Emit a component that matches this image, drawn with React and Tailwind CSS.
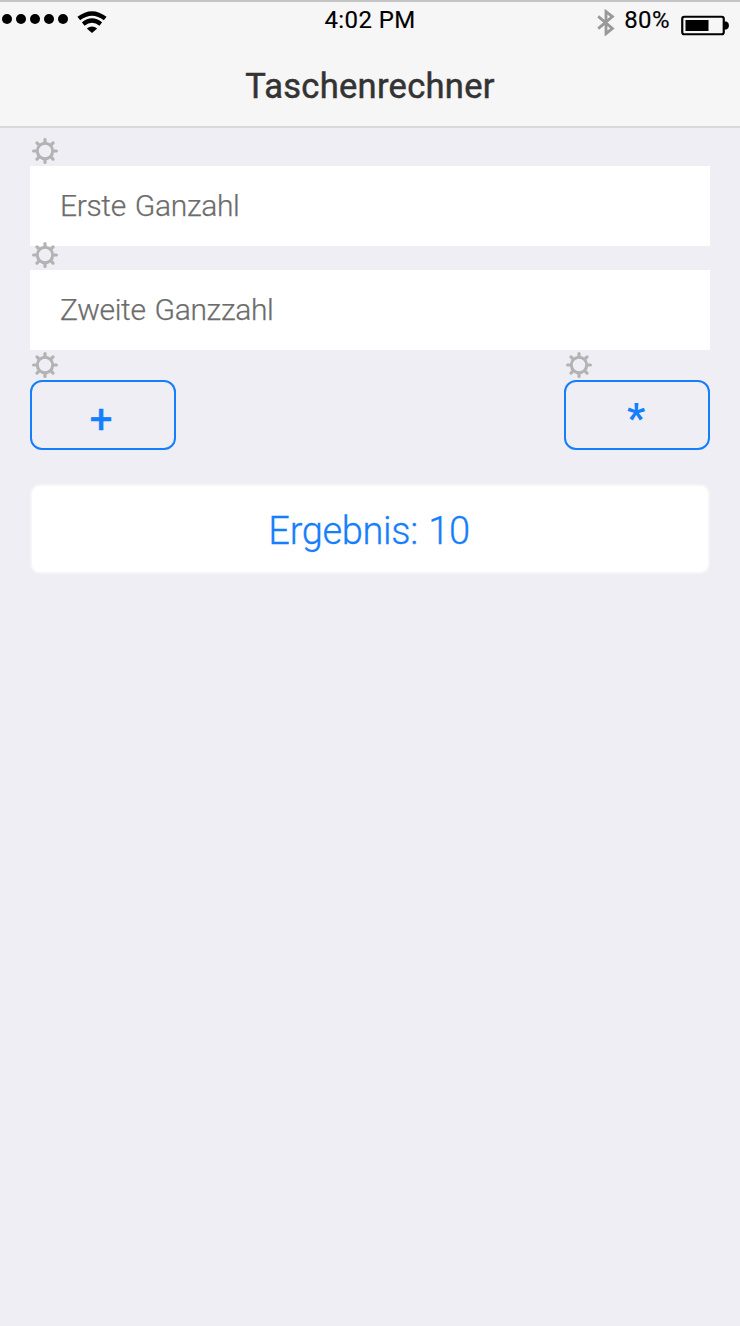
const teeth = [0, 45, 90, 135, 180, 225, 270, 315];

function Gear() {
  return (
    <svg className="ml-0.5 block size-[26px] shrink-0" viewBox="-13 -13 26 26" fill="none" stroke="#b3b3b3" strokeLinecap="round">
      <circle r="7.7" strokeWidth="3" />
      {teeth.map((angle) => (
        <path key={angle} transform={`rotate(${angle})`} d="M0 -8.5V-11.4" strokeWidth="3.2" />
      ))}
    </svg>
  );
}

function Wifi() {
  return (
    <svg className="mt-[9px] ml-2 block h-[22px] w-[30px]" viewBox="0 0 30 22" fill="none" stroke="#000">
      <path d="M1.8 7.6Q15 -2.6 28.2 7.6" strokeWidth="4.4" />
      <path d="M6.2 13Q15 6 23.8 13" strokeWidth="4.2" />
      <path d="M9.8 17.6Q15 13.2 20.2 17.6L15 22Z" fill="#000" stroke="none" />
    </svg>
  );
}

function StatusBar() {
  return (
    <div className="grid h-10 grid-cols-3 text-2xl text-black [-webkit-text-stroke:0.15px]">
      <div className="flex items-start">
        <svg className="mt-[11px] ml-0.5 block h-3 w-[67px]" viewBox="0 0 67 12">
          {[5, 19, 33, 47, 61].map((x) => <circle key={x} cx={x} cy="6" r="5" />)}
        </svg>
        <Wifi />
      </div>
      <div className="mt-px text-center leading-[34px] tracking-[0.4px]">4:02 PM</div>
      <div className="flex items-start justify-end">
        <svg className="mt-[7px] mr-[9px] block h-[27px] w-[18px]" viewBox="0 0 18 27" fill="none" stroke="#999" strokeWidth="2.8">
          <path d="M1.2 7.4L15.4 19.4L9 24.7V2.6L15.4 7.6L1.2 19.6" />
        </svg>
        <span className="mt-px leading-[34px] tracking-[0.4px]">80%</span>
        <svg className="mt-3 mr-[11px] ml-[11px] block h-[22px] w-12" viewBox="0 0 48 22">
          <rect x="1.25" y="2.75" width="41.5" height="17.5" rx="2" fill="none" stroke="#000" strokeWidth="2.2" />
          <rect x="4.5" y="6" width="23" height="11" />
          <path d="M43 7.5H45.5Q48 8.5 48 11.5Q48 14.5 45.5 15.5H43Z" />
        </svg>
      </div>
    </div>
  );
}

function Field({ placeholder }) {
  return (
    <input type="text" aria-label={placeholder} placeholder={placeholder} className="block h-20 w-full rounded-none bg-white px-[30px] pb-0.5 text-[30px] font-light tracking-[-0.34px] text-black outline-none [word-spacing:2px] [-webkit-text-stroke:0.25px] placeholder:text-[#6c6c6c]" />
  );
}

function OperatorButton({ children }) {
  return (
    <div className="w-[146px]">
      <Gear />
      <button className="mt-0.5 flex h-[70px] w-full items-center justify-center rounded-[12px] border-2 border-[#157efb] text-[40px] leading-none font-medium text-[#157efb]">
        {children}
      </button>
    </div>
  );
}

export default function App() {
  return (
    <div className="min-h-[1326px] w-full bg-[#efeef5] font-['Roboto',sans-serif]">
      <header className="h-32 border-t-2 border-b-2 border-t-[#c4c4c4] border-b-[#d9d9d9] bg-[#f6f6f6]">
        <StatusBar />
        <h1 className="text-center text-[34.5px] leading-[89px] font-normal tracking-[0.3px] text-[#333] [-webkit-text-stroke:0.5px]">Taschenrechner</h1>
      </header>
      <main className="px-[30px] pt-2.5">
        <Gear />
        <div className="mt-0.5"><Field placeholder="Erste Ganzahl" /></div>
        <div className="relative z-10 -mt-1"><Gear /></div>
        <div className="mt-0.5"><Field placeholder="Zweite Ganzzahl" /></div>
        <div className="mt-0.5 flex justify-between">
          <OperatorButton><span className="mt-2.5 mr-1 font-normal [-webkit-text-stroke:0.7px]">+</span></OperatorButton>
          <OperatorButton><span className="mt-2 mr-0.5 font-bold">*</span></OperatorButton>
        </div>
        <div className="mt-[34px] flex h-[90px] items-center justify-center rounded-[10px] border-2 border-[#f6f6f6] bg-white pt-1 pr-0.5 text-[38px] font-light tracking-[-0.35px] text-[#157efb] [word-spacing:1.5px] [-webkit-text-stroke:0.3px]">
          Ergebnis: 10
        </div>
      </main>
    </div>
  );
}
